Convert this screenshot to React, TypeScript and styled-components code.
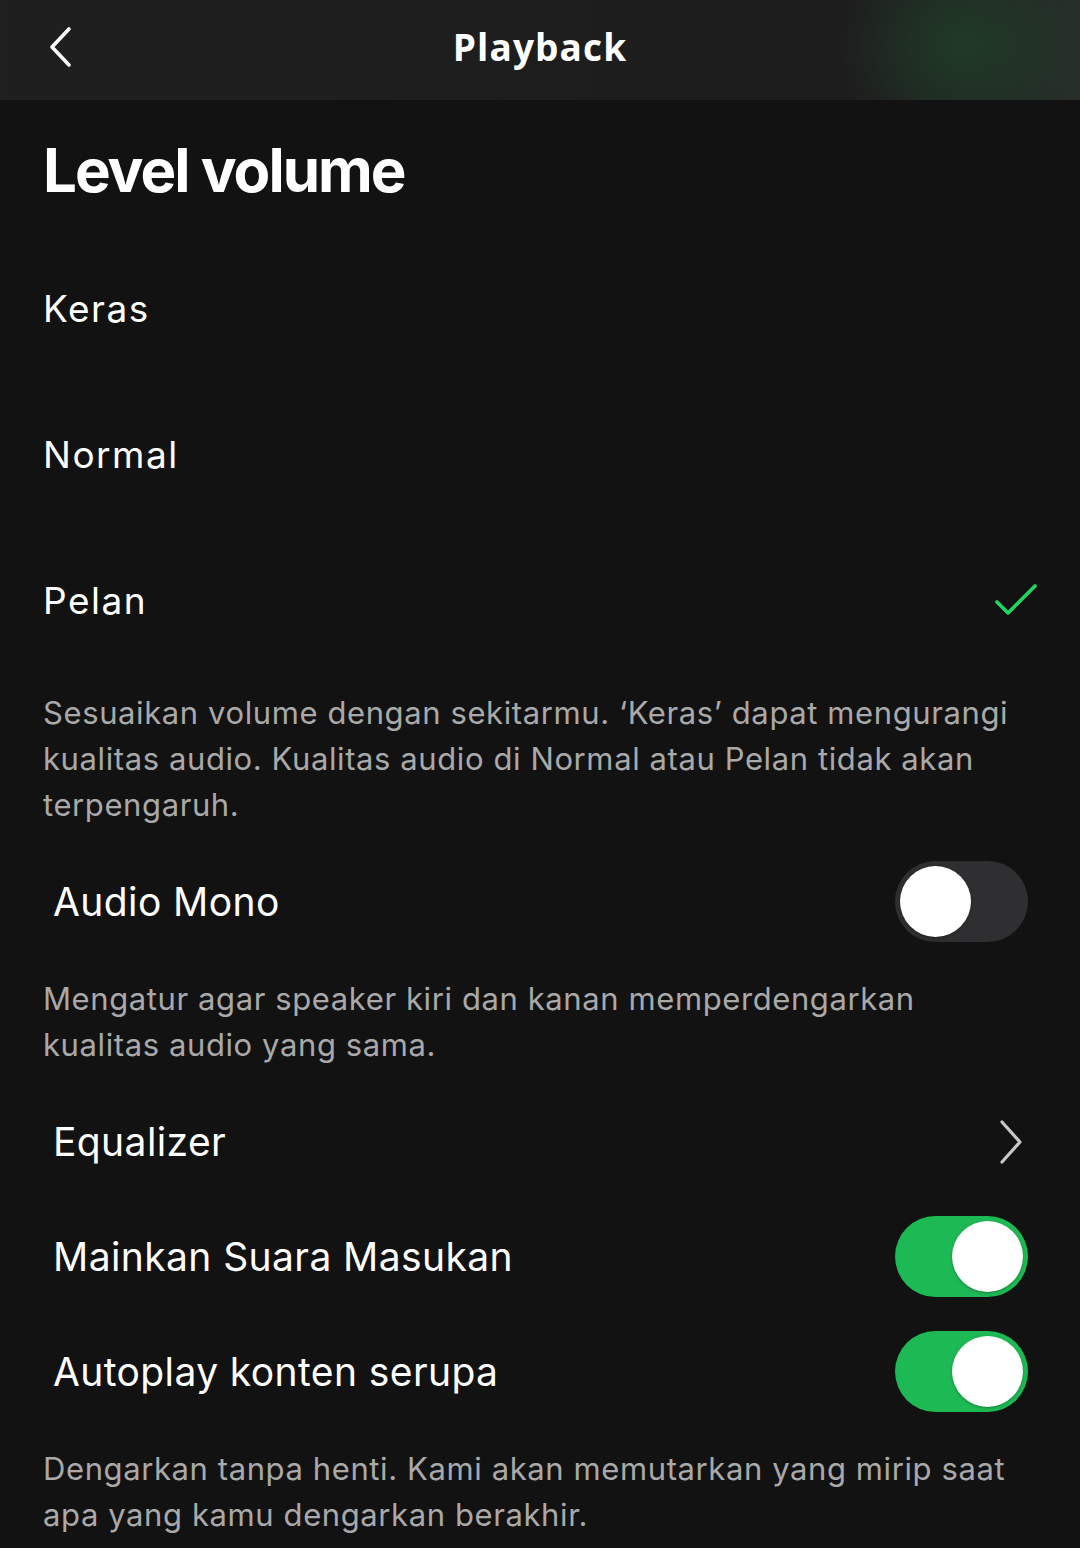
import { useState } from "react";
import styled, { createGlobalStyle } from "styled-components";

const GlobalStyle = createGlobalStyle`
  html, body {
    margin: 0;
    padding: 0;
    background: #121212;
  }
  body {
    font-family: "Inter", "Noto Sans", sans-serif;
    color: #fff;
    -webkit-font-smoothing: antialiased;
  }
`;

const Page = styled.div`
  width: 1080px;
  min-height: 1548px;
  background: #121212;
`;

const Header = styled.header`
  height: 100px;
  display: flex;
  align-items: center;
  justify-content: center;
  position: relative;
  background:
    radial-gradient(ellipse 120px 100px at 960px 45px, rgba(30, 66, 40, 0.7), rgba(30, 66, 40, 0) 100%),
    linear-gradient(90deg, #1f1f1f 0%, #1d1d1d 78%, #263029 100%);
`;

const BackButton = styled.button`
  position: absolute;
  left: 40px;
  top: 22px;
  width: 40px;
  height: 50px;
  padding: 0;
  border: 0;
  background: none;
  display: flex;
  align-items: center;
  justify-content: center;
  cursor: pointer;
`;

const HeaderTitle = styled.h1`
  margin: 0;
  margin-top: -8px;
  font-family: "Open Sans", "Noto Sans", sans-serif;
  font-weight: 700;
  font-size: 37px;
  letter-spacing: 1.1px;
`;

const Section = styled.section`
  display: flex;
  flex-direction: column;
`;

const SectionTitle = styled.h2`
  margin: 39px 0 34px 43px;
  font-weight: 700;
  font-size: 60px;
  line-height: 62px;
  letter-spacing: -2px;
`;

const OptionRow = styled.div`
  height: 146px;
  display: flex;
  align-items: center;
  justify-content: space-between;
  padding: 0 42px 0 43px;
  font-size: 37px;
  letter-spacing: 1.5px;
  cursor: pointer;
`;

const SettingRow = styled.div`
  height: 115px;
  display: flex;
  align-items: center;
  justify-content: space-between;
  padding: 0 52px 0 53px;
  font-size: 39px;
  letter-spacing: 0.4px;
`;

const Description = styled.p`
  margin: 17px 43px 16px 43px;
  font-size: 31px;
  line-height: 46px;
  letter-spacing: 0.6px;
  color: #a9a9a9;
`;

const Track = styled.button<{ $on: boolean }>`
  width: 133px;
  height: 81px;
  border-radius: 41px;
  border: 0;
  padding: 0 5px;
  display: flex;
  align-items: center;
  justify-content: ${(p) => (p.$on ? "flex-end" : "flex-start")};
  background: ${(p) => (p.$on ? "#1db954" : "#2f2f31")};
  cursor: pointer;
`;

const Knob = styled.span`
  width: 71px;
  height: 71px;
  border-radius: 50%;
  background: #fff;
  box-shadow: 0 1px 3px rgba(0, 0, 0, 0.3);
`;

const Toggle = ({ on, onClick }: { on: boolean; onClick: () => void }) => (
  <Track $on={on} onClick={onClick}>
    <Knob />
  </Track>
);

const levels = ["Keras", "Normal", "Pelan"];

export default function App() {
  const [level, setLevel] = useState("Pelan");
  const [mono, setMono] = useState(false);
  const [sounds, setSounds] = useState(true);
  const [autoplay, setAutoplay] = useState(true);

  return (
    <Page>
      <GlobalStyle />
      <Header>
        <BackButton aria-label="Kembali">
          <svg width="26" height="42" viewBox="0 0 26 42" fill="none">
            <path
              d="M22 3 L5 21 L22 39"
              stroke="#fff"
              strokeWidth="3.6"
              strokeLinecap="round"
              strokeLinejoin="round"
            />
          </svg>
        </BackButton>
        <HeaderTitle>Playback</HeaderTitle>
      </Header>

      <Section>
        <SectionTitle>Level volume</SectionTitle>
        {levels.map((l) => (
          <OptionRow key={l} onClick={() => setLevel(l)}>
            {l}
            {level === l && (
              <svg width="44" height="34" viewBox="0 0 44 34" fill="none">
                <path
                  d="M3 19 L14 30 L41 3"
                  stroke="#1ed760"
                  strokeWidth="3.6"
                  strokeLinecap="round"
                  strokeLinejoin="round"
                />
              </svg>
            )}
          </OptionRow>
        ))}
        <Description>
          Sesuaikan volume dengan sekitarmu. ‘Keras’ dapat mengurangi kualitas
          audio. Kualitas audio di Normal atau Pelan tidak akan terpengaruh.
        </Description>

        <SettingRow>
          Audio Mono
          <Toggle on={mono} onClick={() => setMono(!mono)} />
        </SettingRow>
        <Description>
          Mengatur agar speaker kiri dan kanan memperdengarkan kualitas audio
          yang sama.
        </Description>

        <SettingRow>
          Equalizer
          <svg width="30" height="44" viewBox="0 0 30 44" fill="none">
            <path
              d="M4 2 L22 22 L4 42"
              stroke="#c8c8c8"
              strokeWidth="3.2"
              strokeLinecap="round"
              strokeLinejoin="round"
            />
          </svg>
        </SettingRow>
        <SettingRow>
          Mainkan Suara Masukan
          <Toggle on={sounds} onClick={() => setSounds(!sounds)} />
        </SettingRow>
        <SettingRow>
          Autoplay konten serupa
          <Toggle on={autoplay} onClick={() => setAutoplay(!autoplay)} />
        </SettingRow>
        <Description>
          Dengarkan tanpa henti. Kami akan memutarkan yang mirip saat apa yang
          kamu dengarkan berakhir.
        </Description>
      </Section>
    </Page>
  );
}
